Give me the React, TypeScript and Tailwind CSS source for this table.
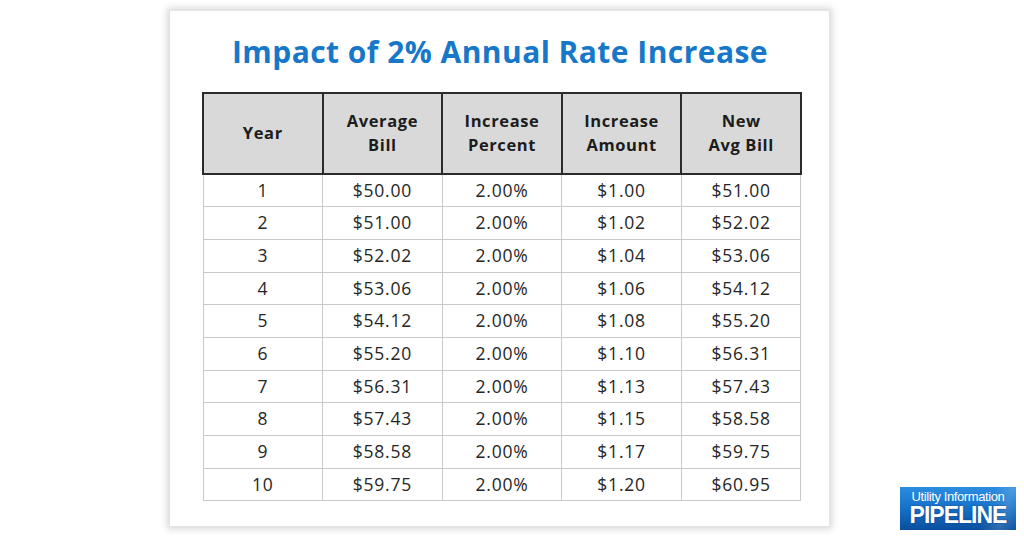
const rows = [
  ["1", "$50.00", "2.00%", "$1.00", "$51.00"],
  ["2", "$51.00", "2.00%", "$1.02", "$52.02"],
  ["3", "$52.02", "2.00%", "$1.04", "$53.06"],
  ["4", "$53.06", "2.00%", "$1.06", "$54.12"],
  ["5", "$54.12", "2.00%", "$1.08", "$55.20"],
  ["6", "$55.20", "2.00%", "$1.10", "$56.31"],
  ["7", "$56.31", "2.00%", "$1.13", "$57.43"],
  ["8", "$57.43", "2.00%", "$1.15", "$58.58"],
  ["9", "$58.58", "2.00%", "$1.17", "$59.75"],
  ["10", "$59.75", "2.00%", "$1.20", "$60.95"],
];

const headers = [["Year"], ["Average", "Bill"], ["Increase", "Percent"], ["Increase", "Amount"], ["New", "Avg Bill"]];

function Logo() {
  return (
    <div className="absolute left-[900px] top-[487px] w-[116px] h-[43px] bg-gradient-to-b from-[#2b8de0] via-[#1670c8] to-[#0a4f9e] flex flex-col items-center justify-center leading-none overflow-hidden">
      <div className="absolute right-[-10px] top-0 w-[40px] h-full bg-gradient-to-r from-transparent via-white/15 to-transparent skew-x-[-20deg]" />
      <span className="relative text-white text-[13px] font-['Liberation_Sans',sans-serif] tracking-[-0.4px]">Utility Information</span>
      <span className="relative text-white text-[23px] font-bold font-['Liberation_Sans',sans-serif] tracking-[-1px] mt-[1px] [text-shadow:0_0_2px_#0a3f80]">PIPELINE</span>
    </div>
  );
}

export default function App() {
  return (
    <div className="relative w-[1024px] h-[536px] bg-white font-['Open_Sans',sans-serif] overflow-hidden">
      <div className="ml-[169px] mt-[10px] w-[661px] h-[517px] bg-white border border-[#e4e4e4] shadow-[0_0_7px_2px_rgba(0,0,0,0.16)] flex flex-col">
        <h1 className="text-center text-[#1778c9] text-[30px] font-bold leading-none pt-[26px] pl-[1px] tracking-[0.45px]">
          Impact of 2% Annual Rate Increase
        </h1>
        <table className="ml-[32px] mt-[25px] border-collapse table-fixed w-[598px] text-[#262626]">
          <thead>
            <tr className="bg-[#d9d9d9] h-[81px]">
              {headers.map((h, i) => (
                <th key={i} className="border-2 border-[#2b2b2b] w-[119.6px] text-[16.5px] font-bold leading-[24px] tracking-[0.6px] text-center align-middle pb-[2px] text-[#1c1c1c]">
                  {h.map((l, j) => (
                    <div key={j}>{l}</div>
                  ))}
                </th>
              ))}
            </tr>
          </thead>
          <tbody>
            {rows.map((r, i) => (
              <tr key={i} className="h-[32.7px]">
                {r.map((c, j) => (
                  <td key={j} className="border border-[#c9c9c9] text-center text-[17.5px] tracking-[0.8px] leading-none p-0">
                    {c}
                  </td>
                ))}
              </tr>
            ))}
          </tbody>
        </table>
      </div>
      <Logo />
    </div>
  );
}
